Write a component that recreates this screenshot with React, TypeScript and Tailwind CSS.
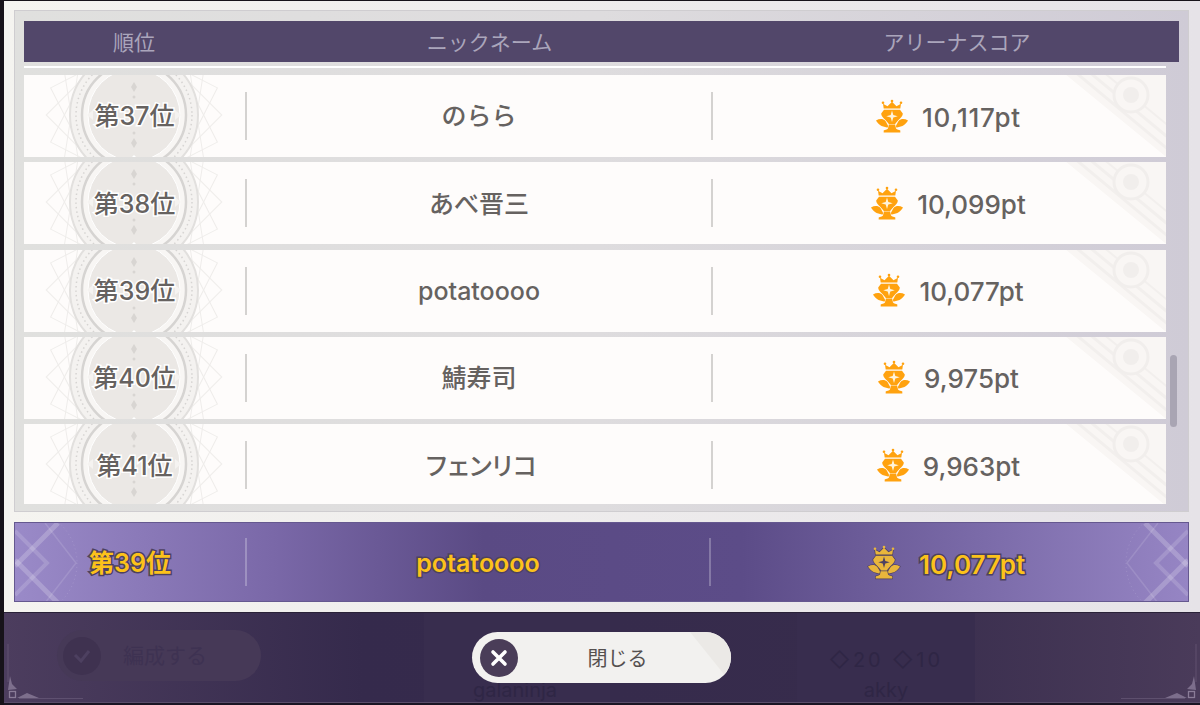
const rows = [
  { rank: "第37位", name: "のらら", score: "10,117pt", track: "tracking-[0.8px]", nameTrack: "" },
  { rank: "第38位", name: "あべ晋三", score: "10,099pt", track: "", nameTrack: "" },
  { rank: "第39位", name: "potatoooo", score: "10,077pt", track: "", nameTrack: "" },
  { rank: "第40位", name: "鯖寿司", score: "9,975pt", track: "", nameTrack: "" },
  { rank: "第41位", name: "フェンリコ", score: "9,963pt", track: "", nameTrack: "tracking-[-3px]" },
];

function ArenaIcon({ fill, edge, star, width }: { fill: string; edge: string; star: string; width: number }) {
  const outline = { stroke: edge, strokeWidth: width, strokeLinejoin: "round" as const, paintOrder: "stroke" };
  return (
    <svg viewBox="-2 -2 36 37" className="w-[36px] h-[37px] shrink-0" aria-hidden="true">
      <g fill={fill} {...outline}>
        <path d="M0 20.500 C3.500 18.500 7 18.500 9.500 21 L13 27.500 C7.500 27.500 3 25.500 0 20.500 Z" />
        <path d="M32 20.500 C28.500 18.500 25 18.500 22.500 21 L19 27.500 C24.500 27.500 29 25.500 32 20.500 Z" />
        <path d="M13 24 H19 L20 28.500 C21 29.500 23 30 24.300 30.500 V32.500 H7.700 V30.500 C9 30 11 29.500 12 28.500 Z" />
        <path d="M8 9.800 H24 L26.800 13.500 C26.800 17.500 21.500 20 18.800 24.500 H13.200 C10.500 20 5.200 17.500 5.200 13.500 Z" />
        <path d="M7.700 8.500 L7 3.800 L11.500 6.300 L16 1.800 L20.500 6.300 L25 3.800 L24.300 8.500 Z" />
      </g>
      <g fill={fill}>
        <circle cx="7" cy="2.800" r="1.300" />
        <circle cx="16" cy="1" r="1.300" />
        <circle cx="25" cy="2.800" r="1.300" />
      </g>
      <path d="M16 10.500 L17.300 15 L21.800 16.300 L17.300 17.600 L16 22.100 L14.700 17.600 L10.200 16.300 L14.700 15 Z" fill={star} />
    </svg>
  );
}

function Medallion() {
  const squares = [0, 18, 36, 54, 72];
  return (
    <svg viewBox="-95 -95 190 190" className="absolute left-[15px] top-[-55px] w-[190px] h-[190px]" aria-hidden="true">
      <g fill="none" stroke="#efedeb" strokeWidth="1">
        {squares.map((a) => (
          <rect key={a} x="-62" y="-62" width="124" height="124" transform={`rotate(${a + 9})`} />
        ))}
      </g>
      <circle r="64" fill="#f4f2f0" stroke="#e2e0de" strokeWidth="2" />
      <circle r="58" fill="none" stroke="#d6d4d2" strokeWidth="1.500" strokeDasharray="1.500 3" />
      <circle r="52" fill="#f8f6f4" stroke="#d6d4d2" strokeWidth="2.500" />
      <circle r="46" fill="#ebe8e5" stroke="#ffffff" strokeWidth="1" />
      <g fill="#d8d5d2">
        <path d="M0 -33 L3 -28 L0 -23 L-3 -28 Z" />
        <circle cx="0" cy="-18" r="1.500" />
        <path d="M0 23 L3 28 L0 33 L-3 28 Z" />
        <circle cx="0" cy="18" r="1.500" />
        <path d="M-47 0 L-41 -5 L-41 5 Z" fill="#f5f3f1" />
        <path d="M47 0 L41 -5 L41 5 Z" fill="#f5f3f1" />
      </g>
      <path d="M-7 -47 L0 -40 L7 -47 Z" fill="#ffffff" />
      <path d="M-7 47 L0 40 L7 47 Z" fill="#ffffff" />
    </svg>
  );
}

function CornerPattern() {
  return (
    <svg viewBox="0 0 100 82" className="absolute right-0 top-0 w-[100px] h-[82px]" aria-hidden="true">
      <defs>
        <clipPath id="corner-cut">
          <path d="M0 0 H100 V82 Z" />
        </clipPath>
      </defs>
      <g clipPath="url(#corner-cut)">
        <path d="M0 0 H100 V82 Z" fill="#f9f6f4" />
        <g fill="none" stroke="#f2efed" strokeWidth="3">
          <path d="M8 -4 L104 76" />
          <path d="M22 -4 L104 64" />
          <path d="M36 -4 L104 52" strokeWidth="2" />
        </g>
        <circle cx="65" cy="20" r="17" fill="#f9f6f4" stroke="#f1eeec" strokeWidth="3" />
        <circle cx="65" cy="20" r="8" fill="#f1eeec" />
      </g>
    </svg>
  );
}

function MeCorner({ flip }: { flip?: boolean }) {
  return (
    <svg viewBox="0 0 70 80" className={`absolute top-0 w-[70px] h-[80px] ${flip ? "right-0 -scale-x-100" : "left-0"}`} aria-hidden="true">
      <g fill="none" stroke="#ffffff" strokeOpacity="0.2">
        <path d="M43 0 L0 43" strokeWidth="5" />
        <path d="M0 37 L43 80" strokeWidth="5" />
        <path d="M0 8 L32 40 L0 72" strokeWidth="4" strokeOpacity="0.15" />
        <path d="M30 0 L61 40 L30 80" strokeWidth="1.500" strokeOpacity="0.12" />
        <circle cx="8" cy="40" r="54" strokeOpacity="0.14" strokeDasharray="1 3" />
      </g>
    </svg>
  );
}

function FooterCorner({ flip }: { flip?: boolean }) {
  return (
    <svg viewBox="0 0 80 64" className={`absolute bottom-[1px] w-[80px] h-[64px] ${flip ? "right-[1px] -scale-x-100" : "left-[1px]"}`} aria-hidden="true">
      <g fill="none" stroke="#8a7c98" strokeWidth="1">
        <path d="M3 6 V44" strokeOpacity="0.35" />
        <path d="M14 60.500 H78" strokeOpacity="0.35" />
        <rect x="4.500" y="53.500" width="6" height="6" strokeWidth="1.300" />
      </g>
      <path d="M3 52 L5 38 L7 46 L12 51 Z M12 60 L22 55 L34 60 Z" fill="#8a7c98" fillOpacity="0.8" />
    </svg>
  );
}

export default function App() {
  return (
    <div className="w-[1200px] h-[705px] overflow-hidden bg-[#17131a] pl-[4px] pt-[1px] flex flex-col font-['Inter','Noto_Sans_CJK_JP',sans-serif]">
      <div className="h-[611px] shrink-0 pl-[10px] pr-[11px] pt-[9px] flex flex-col bg-gradient-to-r from-[#f5f4f0] to-[#e6e3e8]">
        <div className="h-[502px] shrink-0 pt-[10px] pb-[7px] px-[9px] border border-[#cfcdd0] bg-gradient-to-r from-[#e0e0de] via-[#dedcde] to-[#cfcbd6] flex flex-col">
          <div className="h-[41px] shrink-0 flex items-center bg-[#52476a] text-[#aaa5bb] text-[21px] font-['Noto_Sans_CJK_JP',sans-serif]">
            <div className="w-[220px] text-center">順位</div>
            <div className="w-[491px] text-center">ニックネーム</div>
            <div className="flex-1 text-center">アリーナスコア</div>
          </div>
          <div className="flex-1 min-h-0 flex">
            <div className="w-[1142px] shrink-0 flex flex-col">
              <div className="mt-[4px] h-[2px] shrink-0 bg-white" />
              <div className="mt-[7px] flex-1 min-h-0 overflow-hidden flex flex-col gap-[5.33px]">
                {rows.map((r) => (
                  <div key={r.rank} className="relative h-[82px] shrink-0 overflow-hidden flex items-center bg-[#fefcfb] text-[#666260]">
                    <Medallion />
                    <CornerPattern />
                    <div className="relative w-[221px] pt-[2px] text-center text-[25px] font-medium [-webkit-text-stroke:3px_#ffffff] [paint-order:stroke_fill]">{r.rank}</div>
                    <div className="relative w-[2px] h-[48px] bg-[#d4d2d0] shrink-0" />
                    <div className={`relative w-[464px] pt-[2px] text-center text-[25px] font-medium ${r.nameTrack}`}>{r.name}</div>
                    <div className="relative w-[2px] h-[48px] bg-[#d4d2d0] shrink-0" />
                    <div className="relative flex-1 pl-[16px] flex items-center justify-center gap-[12px]">
                      <ArenaIcon fill="#ffa20f" edge="#fefcfb" star="#fff4dc" width={0.9} />
                      <span className={`pt-[2px] text-[26px] font-medium ${r.track}`}>{r.score}</span>
                    </div>
                  </div>
                ))}
              </div>
            </div>
            <div className="flex-1 pl-[4px] pt-[293px]">
              <div className="w-[7px] h-[72px] rounded-full bg-[#a9a5b3]" />
            </div>
          </div>
        </div>
        <div className="relative mt-[10px] h-[80px] shrink-0 overflow-hidden flex items-center border border-[#65588f] bg-[linear-gradient(90deg,#9a8ac8_0%,#7a68a8_22%,#5a4a84_40%,#5c4c88_62%,#7a6aa8_82%,#9685c4_100%)] text-[#fcc21a] font-semibold">
          <MeCorner />
          <MeCorner flip />
          <div className="relative w-[230px] pt-[4px] text-center text-[25px] [-webkit-text-stroke:3px_#4d4160] [paint-order:stroke_fill]">第39位</div>
          <div className="relative w-[2px] h-[48px] shrink-0 bg-[#ffffff]/25" />
          <div className="relative w-[462px] pt-[4px] text-center text-[25px] [-webkit-text-stroke:3px_#4d4160] [paint-order:stroke_fill]">potatoooo</div>
          <div className="relative w-[2px] h-[48px] shrink-0 bg-[#ffffff]/25" />
          <div className="relative flex-1 pr-[8px] flex items-center justify-center gap-[17px]">
            <ArenaIcon fill="#e9b63c" edge="#4d4160" star="#4d4160" width={1.4} />
            <span className="pt-[4px] text-[26px] [-webkit-text-stroke:3px_#4d4160] [paint-order:stroke_fill]">10,077pt</span>
          </div>
        </div>
      </div>

      <div className="relative flex-1 border-t border-b-2 border-t-[#2a2238] border-b-[#1a1524] bg-[linear-gradient(90deg,#4c3d5e_0%,#352a4c_30%,#372c4c_72%,#4a3b5a_100%)]">
        {/* dimmed screen behind the dialog */}
        <div className="absolute inset-0 flex text-[#3e3252]">
          <div className="ml-[53px] mt-[17px] w-[204px] h-[51px] rounded-full bg-[#463957] flex items-center gap-[22px] pl-[6px] text-[21px]">
            <div className="w-[38px] h-[38px] rounded-full bg-[#3f3250] flex items-center justify-center">
              <svg viewBox="0 0 20 20" className="w-[20px] h-[20px]" aria-hidden="true">
                <path d="M3 9 L9 15 L17 5" fill="none" stroke="#4d4060" strokeWidth="3" />
              </svg>
            </div>
            <span>編成する</span>
          </div>
          <div className="ml-[163px] w-[186px] h-[90px] bg-[#382d4e] flex flex-col items-center justify-end text-[20px] text-[#2f2645]">
            <span className="leading-[26px] pr-[4px]">galaninja</span>
          </div>
          <div className="ml-[187px] w-[178px] h-[90px] bg-[#382d4e] flex flex-col items-center justify-end text-[20px] text-[#2f2645]">
            <span className="mb-[2px] tracking-[3px]">◇20 ◇10</span>
            <span className="leading-[26px]">akky</span>
          </div>
        </div>
        <div className="absolute bottom-0 inset-x-0 h-px bg-[#5a4d6a]" />
        <FooterCorner />
        <FooterCorner flip />
        <div className="relative pt-[19px] pr-[1px] flex justify-center">
          <div className="relative overflow-hidden w-[259px] h-[51px] rounded-full bg-[#f2f1ef] flex items-center justify-center text-[20px] text-[#55504f] font-['Noto_Sans_CJK_JP',sans-serif]">
            <svg viewBox="0 0 41 51" className="absolute right-0 top-0 w-[41px] h-[51px]" aria-hidden="true">
              <path d="M0 0 H41 V51 Z" fill="#ebe9e6" />
            </svg>
            <div className="absolute left-[8px] top-[7px] w-[38px] h-[38px] rounded-full bg-[#4a3d58] flex items-center justify-center">
              <svg viewBox="0 0 20 20" className="w-[20px] h-[20px]" aria-hidden="true">
                <path d="M4 4 L16 16 M16 4 L4 16" stroke="#ffffff" strokeWidth="3.600" strokeLinecap="round" />
              </svg>
            </div>
            <span className="relative ml-[32px]">閉じる</span>
          </div>
        </div>
      </div>
    </div>
  );
}
